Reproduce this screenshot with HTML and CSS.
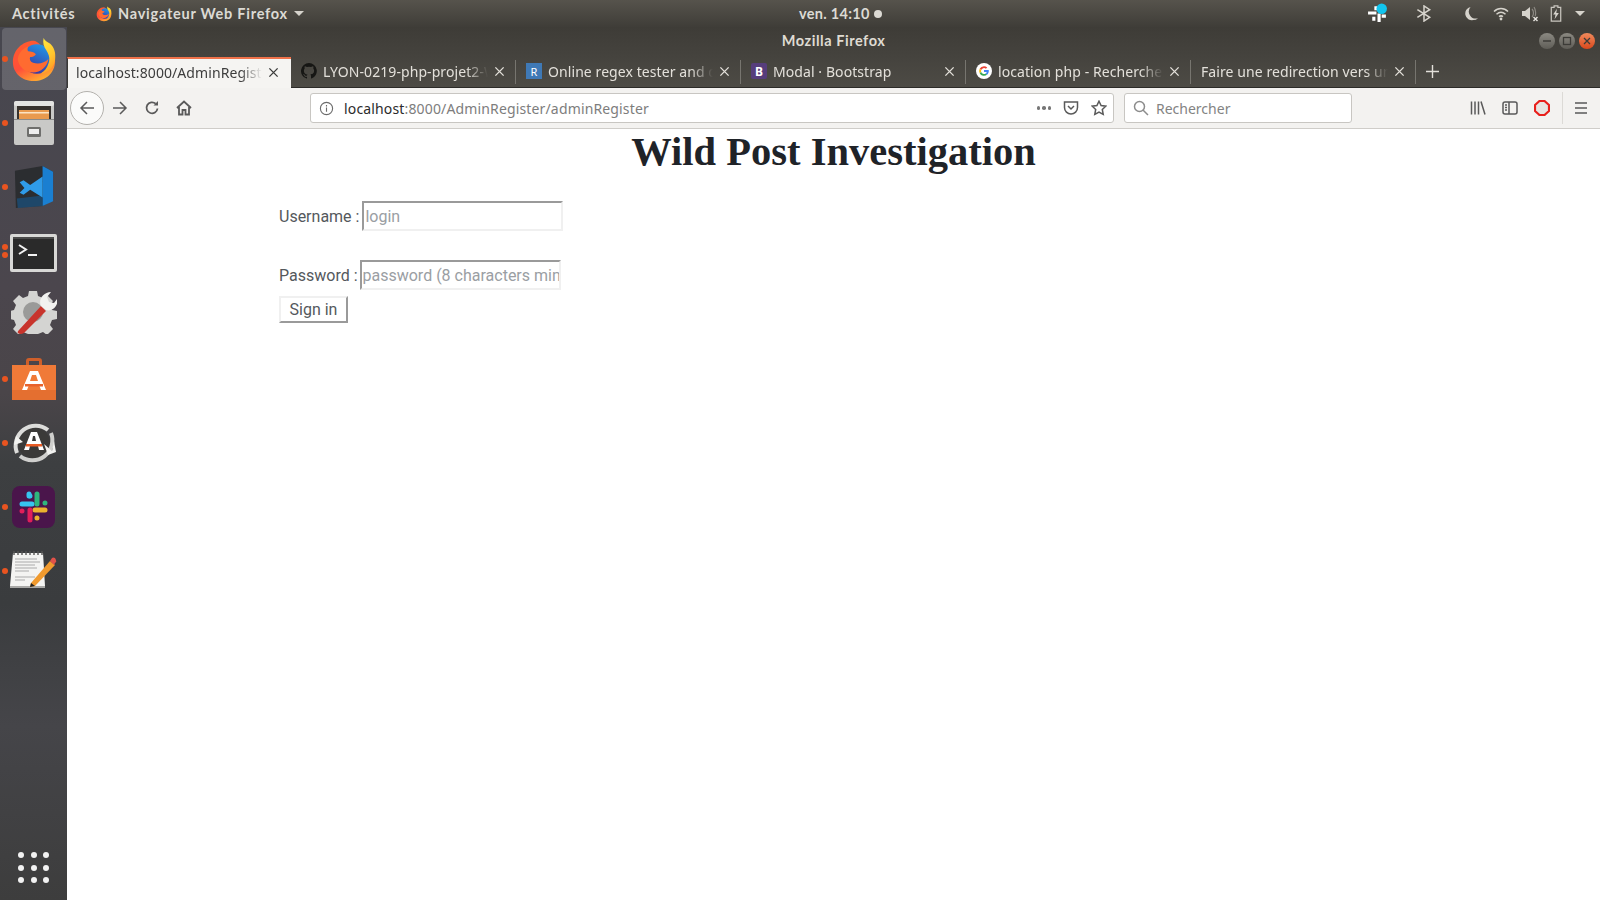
FILE: index.html
```html
<!DOCTYPE html>
<html lang="fr">
<head>
  <meta charset="UTF-8" />
  <title>Wild Post Investigation</title>
  <link rel="stylesheet" href="styles.css">
</head>
<body>
  <svg class="defs" aria-hidden="true">
    <defs>
      <linearGradient id="foxBody" x1="0.2" y1="0" x2="0.7" y2="1">
        <stop offset="0" stop-color="#ff5a2e"/><stop offset="0.55" stop-color="#ff4f3a"/><stop offset="1" stop-color="#ffb32e"/>
      </linearGradient>
      <linearGradient id="foxTail" x1="0.2" y1="0" x2="0.6" y2="1">
        <stop offset="0" stop-color="#ffe83d"/><stop offset="0.6" stop-color="#ffc52e"/><stop offset="1" stop-color="#ff9a24"/>
      </linearGradient>
      <linearGradient id="foxGlobe" x1="0.8" y1="0" x2="0.3" y2="1">
        <stop offset="0" stop-color="#1f9bea"/><stop offset="1" stop-color="#3b2f9e"/>
      </linearGradient>
      <symbol id="firefox" viewBox="0 0 48 48">
        <path d="M24 5C12 5 2 15 2 27c0 11.600 9.600 20 22 20s22-9 22-21c0-5-2-10-5-14-1 3-3 5-5 6C32 11 29 6 24 5z" fill="url(#foxBody)"/>
        <circle cx="27" cy="24" r="15.500" fill="url(#foxGlobe)"/>
        <path d="M7 24c1-6 5-11 11-13-1 2-1 4 0 5 3 0 6 1 8 3-1 2-4 3-6 3-1 2 0 5 3 6 6 2 12 0 16-4-1 8-8 14-16 14C14 38 8 32 7 24z" fill="#ff6b30"/>
        <path d="M34 2c-1 5 0 9 3 13 3 5 4 9 2 14-1 4-4 8-8 10 8-1 14-6 15-14 1-8-1-13-5-17-3-2-6-3-7-6z" fill="url(#foxTail)"/>
      </symbol>
    </defs>
  </svg>

  <header class="panel">
    <div class="panel-left">
      <span class="activities">Activités</span>
      <span class="app-menu">
        <svg class="app-menu-icon"><use href="#firefox"/></svg>
        Navigateur Web Firefox
        <i class="caret"></i>
      </span>
    </div>
    <div class="clock">ven. 14:10<i class="clock-dot"></i></div>
    <div class="tray">
      <svg class="tray-slack" viewBox="0 0 20 20">
        <path d="M1 8h8v3H1zM10 10h3v8h-3zM5 13h3v4H5zM7 3h3v4H7zM14 11h4v3h-4z" fill="#fff"/>
        <circle cx="14" cy="5.500" r="5" fill="#12c5ee"/>
      </svg>
      <svg class="tray-bt" viewBox="0 0 18 18" fill="none" stroke="#d6d3cc" stroke-width="1.600"><path d="M2 5l13 8-6 4V1l6 4L2 13"/></svg>
      <svg class="tray-moon" viewBox="0 0 16 16"><path d="M7 1a7.500 7.500 0 0 0 8 12 7.400 7.400 0 0 1-5 2A7 7 0 0 1 7 1z" fill="#d6d3cc"/></svg>
      <svg class="tray-wifi" viewBox="0 0 16 16" fill="none" stroke="#d6d3cc" stroke-width="1.500"><path d="M1 5.500c4-4 10-4 14 0M3.500 8.200c3-2.600 6-2.600 9 0M6 10.600c1.400-1 2.600-1 4 0"/><circle cx="8" cy="13" r="1.400" fill="#d6d3cc" stroke="none"/></svg>
      <svg class="tray-vol" viewBox="0 0 18 16"><path d="M1 5h3l5-4v13l-5-4H1z" fill="#d6d3cc"/><path d="M11 3c2 2 2 6 0 8M13 1c2 3 2 8 1 9" fill="none" stroke="#8d8a84" stroke-width="1.200"/><path d="M12.500 11l4 4M16.500 11l-4 4" stroke="#e8e6e1" stroke-width="1.400"/></svg>
      <svg class="tray-bat" viewBox="0 0 12 18"><path d="M4 1h4v1.500h3V17H1V2.500h3z" fill="none" stroke="#c9c6bf" stroke-width="1.300"/><path d="M7 4L3 10h2.500L4.500 15 9 8.500H6.300z" fill="#d6d3cc"/></svg>
      <i class="caret tray-caret"></i>
    </div>
  </header>

  <div class="desktop">
    <nav class="dock">
      <div class="dock-item dock-item-active"><i class="run-dot"></i>
        <svg class="ico-firefox"><use href="#firefox"/></svg>
      </div>
      <div class="dock-item"><i class="run-dot"></i>
        <svg class="ico-files" viewBox="0 0 44 44">
          <path d="M2 3q0-3 3-3h34q3 0 3 3v39q0 2-2 2H4q-2 0-2-2z" fill="#c9c9c7"/>
          <rect x="2" y="0" width="40" height="5" rx="2" fill="#e4e4e2"/>
          <rect x="5" y="5" width="34" height="13" fill="#37322e"/>
          <rect x="7" y="9" width="30" height="9" fill="#e99a4e"/>
          <rect x="7" y="11" width="30" height="1.500" fill="#fbe3c4"/>
          <rect x="2" y="18" width="40" height="1" fill="#8b8b89"/>
          <rect x="15" y="26" width="14" height="10" rx="1.500" fill="#6f6f6d"/>
          <rect x="17" y="28" width="10" height="5" fill="#eee"/>
        </svg>
      </div>
      <div class="dock-item"><i class="run-dot"></i>
        <svg class="ico-code" viewBox="0 0 44 44">
          <path d="M2 5L31 0l11 6v30l-11 6-28 2z" fill="#2b2d30"/>
          <path d="M31 0l11 6v31l-11 5z" fill="#1a7fd1"/>
          <path d="M4 34l27-3v11L5 44z" fill="#15588f" opacity=".6"/>
          <path d="M31 11v20L18 23zM7 17l4-2 7 5 13-9v5L21 23l10 8v2L18 25l-7 5-4-2 5-5z" fill="#2f9be8"/>
        </svg>
      </div>
      <div class="dock-item"><i class="run-dot run-dot-upper"></i><i class="run-dot run-dot-lower"></i>
        <svg class="ico-term" viewBox="0 0 47 38">
          <rect width="47" height="38" rx="2" fill="#d8d8d6"/>
          <rect x="3" y="3" width="41" height="32" fill="#2a2a2a"/>
          <rect x="3" y="3" width="41" height="2" fill="#4a4a4a"/>
          <path d="M9 11l7 4.500-7 4.500" fill="none" stroke="#f2f2f2" stroke-width="2"/>
          <rect x="18" y="20" width="9" height="2" fill="#f2f2f2"/>
        </svg>
      </div>
      <div class="dock-item">
        <svg class="ico-tools" viewBox="0 0 46 46">
          <path d="M18 3h8l1 5 5 2 4-3 6 6-3 4 2 5 5 1v8l-5 1-2 5 3 4-6 6-4-3-5 2-1 4h-8l-1-4-5-2-4 3-6-6 3-4-2-5-4-1v-8l4-1 2-5-3-4 6-6 4 3 5-2z" fill="#d4d4d2"/>
          <circle cx="22" cy="24" r="10" fill="#9a9a99"/>
          <path d="M8 42l22-24 5 5-22 22q-4 2-6 0-1-1 1-3z" fill="#c8342c"/>
          <path d="M30 18c-3-6 2-14 10-14l-4 5 2 5 5 1 3-4c2 7-5 13-11 11z" fill="#f2f2f0"/>
        </svg>
      </div>
      <div class="dock-item"><i class="run-dot"></i>
        <svg class="ico-store" viewBox="0 0 44 44">
          <path d="M14 8V4q0-3 3-3h10q3 0 3 3v4h-3V4H17v4z" fill="#cf5f2a"/>
          <path d="M0 8h44v35H0z" fill="#f07a38"/>
          <rect y="33" width="44" height="10" fill="#e46f30"/>
          <path d="M18 14h8l8 19h-5l-2-5H17l-2 5h-5zM20 18l-2 6h8l-2-6z" fill="#fff"/>
          <rect x="13" y="27" width="18" height="2.500" fill="#e8622c"/>
        </svg>
      </div>
      <div class="dock-item"><i class="run-dot"></i>
        <svg class="ico-update" viewBox="0 0 44 44">
          <circle cx="22" cy="22" r="16" fill="#3b3a39"/>
          <path d="M36 9A20 20 0 0 0 5 32" fill="none" stroke="#dcdcda" stroke-width="4"/>
          <path d="M8 35a20 20 0 0 0 31-23" fill="none" stroke="#cfcfcd" stroke-width="4"/>
          <path d="M2 24l2-9 7 6zM42 20l-2 10-8-7 4 11 8-3z" fill="#f2f2f0"/>
          <path d="M19 11h6l7 18h-5l-1-4h-8l-1 4h-5zM21 15l-1 5h4l-1-5z" fill="#fff"/>
          <rect x="14" y="23" width="16" height="2.500" fill="#ea5b24"/>
        </svg>
      </div>
      <div class="dock-item"><i class="run-dot"></i>
        <svg class="ico-slack" viewBox="0 0 43 42">
          <rect width="43" height="42" rx="8" fill="#4a154b"/>
          <g fill="none" stroke-width="5" stroke-linecap="round">
            <path d="M10 18h10M18 10v0" stroke="#36c5f0"/>
            <path d="M25 8v10M33 17v0" stroke="#2eb67d"/>
            <path d="M33 24H23M25 32v0" stroke="#ecb22e"/>
            <path d="M18 24v10M10 25v0" stroke="#e01e5a"/>
          </g>
          <path d="M17 8v2" stroke="#36c5f0" stroke-width="5" stroke-linecap="round"/>
        </svg>
      </div>
      <div class="dock-item"><i class="run-dot"></i>
        <svg class="ico-note" viewBox="0 0 47 37">
          <path d="M3 2h30l2 33H0z" fill="#f4f4f2"/>
          <path d="M0 35h35v2H0z" fill="#a9a9a7"/>
          <path d="M4 0v4M8 0v4M12 0v4M16 0v4M20 0v4M24 0v4M28 0v4M32 0v4" stroke="#555" stroke-width="1.400"/>
          <path d="M5 8h22M5 11h25M5 14h20M5 17h22M5 20h14M5 26h20M5 29h10" stroke="#aaa" stroke-width="1"/>
          <path d="M21 32l19-22 5 4-20 21-5 1z" fill="#f09a2e"/>
          <path d="M40 10l2-3q1-1 3 0l1 2q1 2-1 3l-1 2z" fill="#e0524a"/>
          <path d="M20 36l1-4 4 3z" fill="#222"/>
        </svg>
      </div>
      <div class="apps-grid">
        <i></i><i></i><i></i><i></i><i></i><i></i><i></i><i></i><i></i>
      </div>
    </nav>

    <div class="window">
      <div class="titlebar">
        <span></span>
        <span class="window-title">Mozilla Firefox</span>
        <div class="window-btns">
          <span class="win-btn">
            <svg viewBox="0 0 16 16"><path d="M4 8h8" stroke="#3c3b37" stroke-width="1.500"/></svg>
          </span>
          <span class="win-btn">
            <svg viewBox="0 0 16 16"><rect x="4.500" y="4.500" width="7" height="7" fill="none" stroke="#3c3b37" stroke-width="1.300"/></svg>
          </span>
          <span class="win-btn win-btn-close">
            <svg viewBox="0 0 16 16"><path d="M5 5l6 6M11 5l-6 6" stroke="#3c3b37" stroke-width="1.300"/></svg>
          </span>
        </div>
      </div>

      <div class="tabbar">
        <div class="tab tab-active">
          <span class="tab-title">localhost:8000/AdminRegister/adminRegister</span>
          <svg class="tab-close" viewBox="0 0 12 12"><path d="M1.500 1.500l9 9M10.500 1.500l-9 9"/></svg>
        </div>
        <div class="tab">
          <svg class="favicon" viewBox="0 0 16 16"><path fill="#161614" d="M8 0a8 8 0 0 0-2.500 15.600c.4.100.5-.2.500-.4v-1.400c-2.200.5-2.700-1-2.700-1-.4-.9-.9-1.200-.9-1.200-.7-.5.100-.5.100-.5.800.1 1.200.8 1.200.8.700 1.200 1.900.9 2.300.7.100-.5.300-.9.500-1.100-1.800-.2-3.600-.9-3.600-4 0-.9.300-1.600.8-2.100-.1-.2-.4-1 .1-2.100 0 0 .7-.2 2.200.8a7.600 7.600 0 0 1 4 0c1.500-1 2.200-.8 2.200-.8.400 1.100.200 1.900.100 2.100.5.600.8 1.300.8 2.100 0 3.100-1.900 3.700-3.700 3.900.3.300.6.800.6 1.500v2.200c0 .2.100.5.600.4A8 8 0 0 0 8 0z"/></svg>
          <span class="tab-title">LYON-0219-php-projet2-Wild-Post</span>
          <svg class="tab-close" viewBox="0 0 12 12"><path d="M1.500 1.500l9 9M10.500 1.500l-9 9"/></svg>
        </div>
        <div class="tab">
          <span class="favicon favicon-r">R</span>
          <span class="tab-title">Online regex tester and debugger</span>
          <svg class="tab-close" viewBox="0 0 12 12"><path d="M1.500 1.500l9 9M10.500 1.500l-9 9"/></svg>
        </div>
        <div class="tab">
          <span class="favicon favicon-b">B</span>
          <span class="tab-title">Modal · Bootstrap</span>
          <svg class="tab-close" viewBox="0 0 12 12"><path d="M1.500 1.500l9 9M10.500 1.500l-9 9"/></svg>
        </div>
        <div class="tab">
          <svg class="favicon" viewBox="0 0 16 16">
            <circle cx="8" cy="8" r="8" fill="#fff"/>
            <path d="M8 3.200a4.800 4.800 0 0 1 3.200 1.200l-1.300 1.300A3 3 0 0 0 5.200 7L3.700 5.800A4.800 4.800 0 0 1 8 3.200z" fill="#ea4335"/>
            <path d="M3.700 5.800L5.200 7a3 3 0 0 0 0 2L3.700 10.200a4.800 4.800 0 0 1 0-4.400z" fill="#fbbc05"/>
            <path d="M5.200 9a3 3 0 0 0 4.500 1.500l1.400 1.200a4.800 4.800 0 0 1-7.400-1.500z" fill="#34a853"/>
            <path d="M12.800 8c0 1.500-.6 2.800-1.700 3.700l-1.400-1.200c.5-.4.900-.9 1-1.600H8V7.100h4.700c.1.300.1.600.1.900z" fill="#4285f4"/>
          </svg>
          <span class="tab-title">location php - Recherche Google</span>
          <svg class="tab-close" viewBox="0 0 12 12"><path d="M1.500 1.500l9 9M10.500 1.500l-9 9"/></svg>
        </div>
        <div class="tab">
          <span class="tab-title">Faire une redirection vers une autre page</span>
          <svg class="tab-close" viewBox="0 0 12 12"><path d="M1.500 1.500l9 9M10.500 1.500l-9 9"/></svg>
        </div>
        <svg class="tab-new" viewBox="0 0 14 14"><path d="M7 0v14M0 7h14"/></svg>
      </div>

      <div class="toolbar">
        <span class="back-btn">
          <svg viewBox="0 0 16 16" class="tb-icon"><path d="M15 8H2M8 2L2 8l6 6"/></svg>
        </span>
        <svg viewBox="0 0 16 16" class="tb-icon tb-forward"><path d="M1 8h13M8 2l6 6-6 6"/></svg>
        <svg viewBox="0 0 16 16" class="tb-icon tb-reload"><path d="M13.500 8.500a5.500 5.500 0 1 1-1.800-4.800"/><path d="M14 1v4.500H9.500" fill="#5a5a5a" stroke="none"/></svg>
        <svg viewBox="0 0 16 16" class="tb-icon tb-home"><path d="M1 8l7-6.500L15 8M3 7v7.500h3.500V10h3v4.500H13V7"/></svg>
        <div class="urlbar">
          <svg viewBox="0 0 16 16" class="url-info"><circle cx="8" cy="8" r="6.500"/><path d="M8 7v4.500M8 4.200v1.600"/></svg>
          <span class="url-text"><b>localhost</b>:8000/AdminRegister/adminRegister</span>
          <span class="url-dots"><i></i><i></i><i></i></span>
          <svg viewBox="0 0 16 16" class="tb-icon url-pocket"><path d="M1.500 2h13v5.500a6.500 6.500 0 0 1-13 0z"/><path d="M5 6l3 3 3-3"/></svg>
          <svg viewBox="0 0 16 16" class="tb-icon url-star"><path d="M8 1.200l2.100 4.400 4.700.6-3.500 3.300.9 4.800L8 12l-4.200 2.300.9-4.800L1.200 6.200l4.700-.6z"/></svg>
        </div>
        <div class="searchbar">
          <svg viewBox="0 0 16 16" class="search-icon"><circle cx="6.500" cy="6.500" r="5"/><path d="M10 10l5 5"/></svg>
          <span>Rechercher</span>
        </div>
        <div class="toolbar-right">
          <svg viewBox="0 0 16 16" class="tb-icon"><path d="M1.500 1.500v13M5 1.500v13M8.500 1.500v13M11 1.500l4 13"/></svg>
          <svg viewBox="0 0 16 16" class="tb-icon"><rect x="1" y="2" width="14" height="12" rx="2"/><path d="M7 2v12M3 5h2M3 7.500h2M3 10h2"/></svg>
          <svg viewBox="0 0 16 16" class="opera"><path d="M5.500 1h5L15 5v6l-4.500 4h-5L1 11V5z" fill="#e7e5e2" stroke="#e8201c" stroke-width="2.200"/></svg>
          <i class="toolbar-sep"></i>
          <svg viewBox="0 0 16 16" class="tb-icon tb-menu"><path d="M2 3h12M2 8h12M2 13h12"/></svg>
        </div>
      </div>

      <main class="page">
        <h1 class="page-title">Wild Post Investigation</h1>
        <form class="login-form">
          <div class="form-row form-row-user">
            <label for="login">Username :</label>
            <input id="login" type="text" placeholder="login">
          </div>
          <div class="form-row form-row-pass">
            <label for="password">Password :</label>
            <input id="password" type="password" placeholder="password (8 characters minimum)">
          </div>
          <button type="button" class="signin">Sign in</button>
        </form>
      </main>
    </div>
  </div>
</body>
</html>
```

FILE: styles.css
```css
* {
  box-sizing: border-box;
}
body {
  margin: 0;
  height: 900px;
  overflow: hidden;
  display: flex;
  flex-direction: column;
  font-family: 'Noto Sans', sans-serif;
  background: #fff;
}
.defs {
  position: absolute;
  width: 0;
  height: 0;
}
i {
  display: block;
}

/* gnome panel */
.panel {
  height: 27px;
  flex: none;
  display: flex;
  align-items: center;
  background: linear-gradient(#56534c, #3f3d38);
  color: #dcdad4;
  font-family: 'Lato', sans-serif;
  font-size: 14.500px;
  font-weight: 700;
  letter-spacing: 0.75px;
}
.panel-left {
  width: 799px;
  display: flex;
  align-items: center;
  padding-left: 12px;
}
.activities {
  width: 84px;
}
.app-menu {
  display: flex;
  align-items: center;
  gap: 6px;
}
.app-menu-icon {
  width: 16px;
  height: 17px;
}
.caret {
  width: 0;
  height: 0;
  border-left: 5px solid transparent;
  border-right: 5px solid transparent;
  border-top: 5px solid #d6d3cc;
}
.clock {
  display: flex;
  align-items: center;
  gap: 4px;
  letter-spacing: 0.3px;
}
.clock-dot {
  width: 8px;
  height: 8px;
  border-radius: 50%;
  background: #dcdad4;
}
.tray {
  margin-left: auto;
  display: flex;
  align-items: center;
  height: 27px;
  padding-right: 15px;
}
.tray-slack {
  width: 21px;
  height: 21px;
  margin-right: 27px;
}
.tray-bt {
  width: 18px;
  height: 17px;
  margin-right: 31px;
}
.tray-moon {
  width: 15px;
  height: 15px;
  margin-right: 14px;
}
.tray-wifi {
  width: 16px;
  height: 16px;
  margin-right: 12px;
}
.tray-vol {
  width: 18px;
  height: 16px;
  margin-right: 11px;
}
.tray-bat {
  width: 12px;
  height: 17px;
  margin-right: 13px;
}

/* dock + window */
.desktop {
  flex: 1;
  display: flex;
  min-height: 0;
}
.dock {
  width: 67px;
  flex: none;
  display: flex;
  flex-direction: column;
  background: linear-gradient(#47474f 0, #4b464d 30%, #4a4549 42%, #3d3f41 50%, #3a3c3e 66%, #454549 80%, #3d3d3d 100%);
}
.dock-item {
  position: relative;
  height: 64px;
  flex: none;
  display: flex;
  align-items: center;
  justify-content: center;
}
.dock-item-active::before {
  content: "";
  position: absolute;
  left: 2px;
  right: 1px;
  top: 1px;
  bottom: 1px;
  border-radius: 4px;
  background: rgba(255, 255, 255, 0.16);
}
.dock-item svg {
  position: relative;
}
.run-dot {
  position: absolute;
  left: 2px;
  top: 29px;
  width: 6px;
  height: 6px;
  border-radius: 50%;
  background: #e95420;
}
.run-dot-upper {
  top: 25px;
}
.run-dot-lower {
  top: 33px;
}
.ico-firefox {
  width: 46px;
  height: 46px;
}
.ico-files {
  width: 44px;
  height: 44px;
  margin-top: -1px;
}
.ico-code {
  width: 42px;
  height: 44px;
}
.ico-term {
  width: 47px;
  height: 38px;
  margin-top: 4px;
}
.ico-tools {
  width: 46px;
  height: 46px;
  margin-top: -8px;
}
.ico-store {
  width: 44px;
  height: 44px;
}
.ico-update {
  width: 44px;
  height: 44px;
}
.ico-slack {
  width: 43px;
  height: 42px;
}
.ico-note {
  width: 47px;
  height: 37px;
  margin-top: -4px;
}
.apps-grid {
  margin-top: auto;
  margin-bottom: 17px;
  margin-left: 18px;
  display: grid;
  grid-template-columns: repeat(3, 6px);
  gap: 6.500px;
}
.apps-grid i {
  height: 6px;
  border-radius: 50%;
  background: #f2f2f2;
}

.window {
  flex: 1;
  min-width: 0;
  display: flex;
  flex-direction: column;
}
.titlebar {
  height: 30px;
  flex: none;
  display: grid;
  grid-template-columns: 1fr auto 1fr;
  align-items: center;
  background: linear-gradient(#3e3c37, #45433e);
}
.window-title {
  color: #dfdbd2;
  font-family: 'Lato', sans-serif;
  font-size: 14.500px;
  font-weight: 700;
  letter-spacing: 0.55px;
  padding-bottom: 4px;
}
.window-btns {
  justify-self: end;
  display: flex;
  gap: 4px;
  padding-right: 5px;
  padding-bottom: 3px;
}
.win-btn {
  width: 16px;
  height: 16px;
  border-radius: 50%;
  background: linear-gradient(#8b8982, #5f5d57);
}
.win-btn svg {
  display: block;
}
.win-btn-close {
  background: linear-gradient(#f08a5c, #d9481c);
}

/* tabs */
.tabbar {
  height: 31px;
  flex: none;
  display: flex;
  background: linear-gradient(#45433e, #4d4b45);
  border-bottom: 1px solid #2c2b28;
  font-size: 14px;
  letter-spacing: 0.08px;
}
.tab {
  width: 225px;
  flex: none;
  display: flex;
  align-items: center;
  gap: 6px;
  padding: 0 10px 2px 10px;
  margin: 3px 0;
  color: #e3e0da;
  border-right: 1px solid #77756f;
}
.tab-active {
  width: 224px;
  margin: 0;
  height: 31px;
  padding-left: 8px;
  padding-right: 12px;
  background: #f5f4f2;
  color: #3d3d3d;
  border-right: none;
  border-top: 2px solid #f0724a;
  border-left: 1px solid #3a3936;
}
.tab-title {
  flex: 1;
  min-width: 0;
  overflow: hidden;
  white-space: nowrap;
  -webkit-mask-image: linear-gradient(to right, #000 calc(100% - 22px), transparent);
  mask-image: linear-gradient(to right, #000 calc(100% - 22px), transparent);
}
.tab-close {
  width: 11px;
  height: 11px;
  flex: none;
  fill: none;
  stroke: currentColor;
  stroke-width: 1.500;
}
.favicon {
  width: 16px;
  height: 16px;
  flex: none;
}
.favicon-r, .favicon-b {
  display: flex;
  align-items: center;
  justify-content: center;
  font-size: 11px;
  color: #fff;
  background: #3f79b6;
}
.favicon-b {
  background: #563d7c;
  font-size: 12px;
  font-weight: 700;
  border-radius: 2px;
}
.tab-new {
  width: 13px;
  height: 13px;
  margin: 8px 0 0 10px;
  fill: none;
  stroke: #e3e0da;
  stroke-width: 1.500;
}

/* nav toolbar */
.toolbar {
  height: 41px;
  flex: none;
  display: flex;
  align-items: center;
  background: #f3f2f0;
  border-bottom: 1px solid #cfcdc9;
  padding-left: 3px;
}
.tb-icon {
  width: 16px;
  height: 16px;
  flex: none;
  fill: none;
  stroke: #5a5a5a;
  stroke-width: 1.500;
}
.back-btn {
  width: 34px;
  height: 34px;
  border-radius: 50%;
  border: 1px solid #b3b1ad;
  background: #fbfbfa;
  display: flex;
  align-items: center;
  justify-content: center;
}
.tb-forward {
  margin-left: 8px;
}
.tb-reload {
  margin-left: 16px;
  stroke-width: 1.800;
}
.tb-home {
  margin-left: 16px;
  stroke-width: 1.800;
}
.urlbar, .searchbar {
  height: 30px;
  display: flex;
  align-items: center;
  background: #fff;
  border: 1px solid #c8c6c2;
  border-radius: 3px;
  font-size: 14px;
  color: #7d7d7d;
}
.urlbar {
  width: 804px;
  margin-left: 118px;
  padding: 0 6px 0 8px;
  letter-spacing: 0.15px;
}
.url-info {
  width: 15px;
  height: 15px;
  flex: none;
  fill: none;
  stroke: #6b6b6b;
  stroke-width: 1.200;
  margin-right: 10px;
}
.url-text {
  flex: 1;
  white-space: nowrap;
}
.url-text b {
  font-weight: 400;
  color: #2b2b2b;
}
.url-dots {
  display: flex;
  gap: 2px;
  margin-right: 12px;
}
.url-dots i {
  width: 3.500px;
  height: 3.500px;
  border-radius: 50%;
  background: #777;
}
.url-pocket {
  margin-right: 12px;
}
.searchbar {
  width: 228px;
  margin-left: 10px;
  padding-left: 8px;
  gap: 7px;
  color: #838383;
}
.search-icon {
  width: 16px;
  height: 16px;
  fill: none;
  stroke: #8c8c8c;
  stroke-width: 1.500;
}
.toolbar-right {
  flex: 1;
  display: flex;
  align-items: center;
  padding-left: 118px;
  gap: 16px;
}
.opera {
  width: 16px;
  height: 16px;
}
.toolbar-sep {
  width: 1px;
  height: 32px;
  background: #dcdad6;
  margin-left: -4px;
}
.tb-menu {
  margin-left: -6px;
}

/* page */
.page {
  flex: 1;
  background: #fff;
  font-family: Roboto, sans-serif;
  color: #212529;
}
.page-title {
  margin: 0;
  text-align: center;
  font-family: 'Liberation Serif', serif;
  font-size: 40.500px;
  line-height: 46px;
  font-weight: 700;
  color: #1f2328;
}
.login-form {
  margin: 26px 0 0 212px;
  font-size: 16px;
}
.form-row {
  display: flex;
  align-items: center;
  height: 30px;
  margin-bottom: 29px;
  color: #54585c;
}
.form-row-user {
  gap: 3px;
}
.form-row-pass {
  gap: 2px;
  margin-bottom: 6px;
}
.form-row input {
  width: 201px;
  height: 30px;
  padding: 0 0 0 1px;
  font: 16px Roboto, sans-serif;
  border: 2px solid;
  border-color: #9a9a9a #f0f0f0 #f0f0f0 #9a9a9a;
  background: #fff;
}
.form-row input::placeholder {
  color: #9a9ea3;
  opacity: 1;
}
.signin {
  width: 69px;
  height: 27px;
  padding: 0;
  font: 16px Roboto, sans-serif;
  color: #54585c;
  background: #fff;
  border: 2px solid;
  border-color: #f0f0f0 #9a9a9a #9a9a9a #f0f0f0;
}
```
